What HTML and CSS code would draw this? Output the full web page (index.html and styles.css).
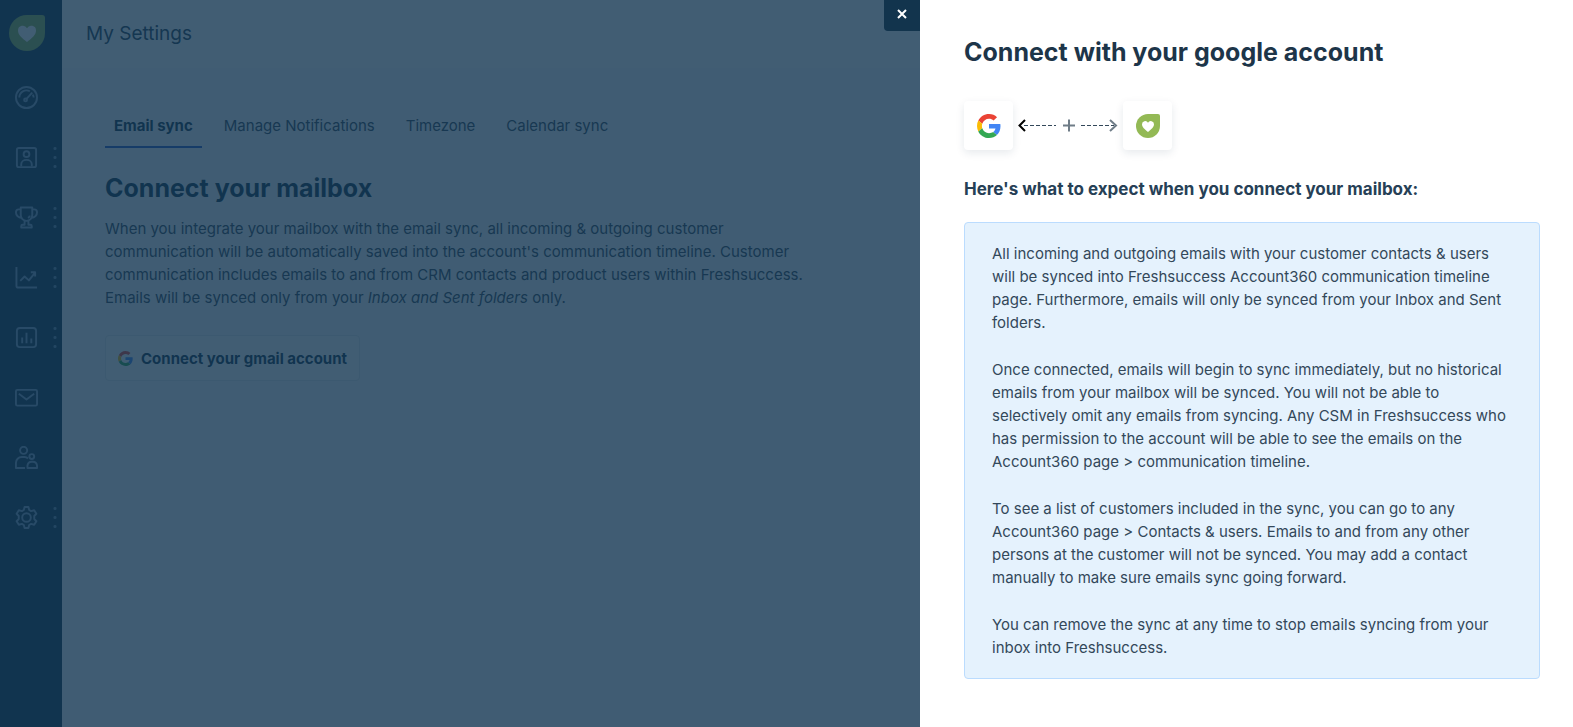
FILE: index.html
```html
<!DOCTYPE html>
<html lang="en">
<head>
  <meta charset="utf-8">
  <title>My Settings</title>
  <link rel="stylesheet" href="styles.css">
</head>
<body>
  <svg class="defs" aria-hidden="true">
    <symbol id="google" viewBox="0 0 48 48">
      <path fill="#EA4335" d="M24 9.5c3.54 0 6.71 1.22 9.21 3.6l6.85-6.85C35.9 2.38 30.47 0 24 0 14.62 0 6.51 5.38 2.56 13.22l7.98 6.19C12.43 13.72 17.74 9.5 24 9.5z"/>
      <path fill="#4285F4" d="M46.98 24.55c0-1.57-.15-3.09-.38-4.55H24v9.02h12.94c-.58 2.96-2.26 5.48-4.78 7.18l7.73 6c4.51-4.18 7.09-10.36 7.09-17.65z"/>
      <path fill="#FBBC05" d="M10.53 28.59c-.48-1.45-.76-2.99-.76-4.59s.27-3.14.76-4.59l-7.98-6.19C.92 16.46 0 20.12 0 24c0 3.88.92 7.54 2.56 10.78l7.97-6.19z"/>
      <path fill="#34A853" d="M24 48c6.48 0 11.93-2.13 15.89-5.81l-7.73-6c-2.15 1.45-4.92 2.3-8.16 2.3-6.26 0-11.57-4.22-13.47-9.91l-7.98 6.19C6.51 42.62 14.62 48 24 48z"/>
    </symbol>
    <symbol id="fresh" viewBox="0 0 36 36">
      <path class="leaf" d="M18 0h15a3 3 0 0 1 3 3v15a18 18 0 1 1-18-18z"/>
      <path class="heart" d="M18 27c-5-4-9-7-9-11.500a4.800 4.800 0 0 1 9-2.300 4.800 4.800 0 0 1 9 2.300c0 4.500-4 7.500-9 11.500z"/>
    </symbol>
  </svg>

  <div class="app">
    <nav class="sidebar">
      <a href="#" class="logo" aria-label="Home"><svg><use href="#fresh"/></svg></a>
      <a href="#" class="nav-item" aria-label="Dashboard">
        <svg viewBox="0 0 24 24"><circle cx="12" cy="12" r="11"/><path d="M4.500 12a7.500 7.500 0 0 1 11-6.500M18.500 9a7.500 7.500 0 0 1 1 3"/><circle cx="11" cy="14.500" r="1.500"/><path d="M12 13.500l6-6.500"/></svg>
      </a>
      <a href="#" class="nav-item more" aria-label="Accounts">
        <svg viewBox="0 0 24 24"><rect x="2" y="2" width="20" height="20" rx="2"/><circle cx="12" cy="8.500" r="3"/><path d="M6.500 21.500v-2.500a5.500 4.500 0 0 1 11 0v2.500"/></svg>
      </a>
      <a href="#" class="nav-item more" aria-label="Success">
        <svg viewBox="0 0 24 24"><path d="M6 1.500h12v8a6 6 0 0 1-12 0zM6 3.500H4a3 3 0 0 0-3 3c0 3 2.500 5.500 6.500 6M18 3.500h2a3 3 0 0 1 3 3c0 3-2.500 5.500-6.500 6M10 15.500v4H8a1.500 1.500 0 0 0-1.500 1.500v1.500h11V21a1.500 1.500 0 0 0-1.500-1.500h-2v-4M15.500 10a3.500 3.500 0 0 1-2 2.500"/></svg>
      </a>
      <a href="#" class="nav-item more" aria-label="Trends">
        <svg viewBox="0 0 24 24"><path d="M1.500 1v19.500a2 2 0 0 0 2 2H23M5.500 15.500l4.500-4.500 4.500 4 6.500-8M16.500 6.500H21v4.500"/></svg>
      </a>
      <a href="#" class="nav-item more" aria-label="Reports">
        <svg viewBox="0 0 24 24"><rect x="2" y="2" width="20" height="20" rx="3"/><path d="M7.500 12v6M12 7v11M17 13v5"/></svg>
      </a>
      <a href="#" class="nav-item" aria-label="Email">
        <svg viewBox="0 0 24 24"><rect x="1" y="4" width="22" height="16.500" rx="1.500"/><path d="M4 8l8 6 8-6"/></svg>
      </a>
      <a href="#" class="nav-item" aria-label="Users">
        <svg viewBox="0 0 24 24"><circle cx="9" cy="4.500" r="3.700"/><path d="M10.500 23H1v-5.500a6 6 0 0 1 6-6h3c1.500 0 2.500.5 3.500 1.500"/><circle cx="17.500" cy="11" r="2.500"/><path d="M13 23v-2.500a4.500 4.500 0 0 1 4.500-4h1a4.500 4.500 0 0 1 4.500 4V23z"/></svg>
      </a>
      <a href="#" class="nav-item more" aria-label="Settings">
        <svg viewBox="0 0 24 24"><path d="M10 1h4l.8 3.200 2 1.100L20 4.400l2.300 3.700-2.200 2.300v3.200l2.200 2.300-2.300 3.700-3.200-.9-2 1.100L14 23h-4l-.8-3.200-2-1.100-3.200.9-2.300-3.700 2.200-2.300v-3.200L1.700 8.100 4 4.400l3.200.9 2-1.100z"/><circle cx="12" cy="12" r="4.500"/></svg>
      </a>
    </nav>

    <div class="page">
      <header class="page-header">My Settings</header>
      <main class="settings">
        <nav class="tabs">
          <a href="#" class="tab active">Email sync</a>
          <a href="#" class="tab">Manage Notifications</a>
          <a href="#" class="tab">Timezone</a>
          <a href="#" class="tab">Calendar sync</a>
        </nav>
        <h1>Connect your mailbox</h1>
        <p class="intro">When you integrate your mailbox with the email sync, all incoming &amp; outgoing customer communication will be automatically saved into the account's communication timeline. Customer communication includes emails to and from CRM contacts and product users within Freshsuccess. Emails will be synced only from your <em>Inbox and Sent folders</em> only.</p>
        <button type="button" class="connect"><svg><use href="#google"/></svg>Connect your gmail account</button>
      </main>
    </div>
  </div>

  <div class="overlay"></div>

  <aside class="drawer">
    <button type="button" class="close" aria-label="Close">
      <svg viewBox="0 0 10 10"><path d="M1 1l8 8M9 1l-8 8"/></svg>
    </button>
    <h2>Connect with your google account</h2>
    <div class="link-row">
      <span class="tile"><svg><use href="#google"/></svg></span>
      <svg class="arrows" viewBox="0 0 100 16">
        <path class="dash" d="M6 7.500h32M63 7.500h33"/>
        <path class="head-left" d="M7 2L1.500 7.500 7 13"/>
        <path class="head-right" d="M92 2l6 5.500-6 5.500"/>
        <path class="plus" d="M45 7.500h12M51 1.500v12"/>
      </svg>
      <span class="tile"><svg><use href="#fresh"/></svg></span>
    </div>
    <h3>Here's what to expect when you connect your mailbox:</h3>
    <div class="info">
      <p>All incoming and outgoing emails with your customer contacts &amp; users will be synced into Freshsuccess Account360 communication timeline page. Furthermore, emails will only be synced from your Inbox and Sent folders.</p>
      <p>Once connected, emails will begin to sync immediately, but no historical emails from your mailbox will be synced. You will not be able to selectively omit any emails from syncing. Any CSM in Freshsuccess who has permission to the account will be able to see the emails on the Account360 page &gt; communication timeline.</p>
      <p>To see a list of customers included in the sync, you can go to any Account360 page &gt; Contacts &amp; users. Emails to and from any other persons at the customer will not be synced. You may add a contact manually to make sure emails sync going forward.</p>
      <p>You can remove the sync at any time to stop emails syncing from your inbox into Freshsuccess.</p>
    </div>
  </aside>
</body>
</html>
```
FILE: styles.css
```css
* {
  box-sizing: border-box;
}

body {
  margin: 0;
  font-family: Inter, "Liberation Sans", sans-serif;
  font-size: 15px;
  line-height: 23px;
  color: #12344d;
}

h1, h2, h3, p {
  margin: 0;
}

a {
  color: inherit;
  text-decoration: none;
}

.defs {
  position: absolute;
  width: 0;
  height: 0;
}

.leaf {
  fill: #93b955;
}

.heart {
  fill: #fff;
}

/* app behind the drawer */
.app {
  display: flex;
  min-height: 100vh;
}

.sidebar {
  width: 62px;
  flex-shrink: 0;
  padding: 15px 0 0 9px;
  background-color: #12344d;
}

.logo {
  display: block;
  margin-bottom: 16px;
}

.logo svg {
  display: block;
  width: 36px;
  height: 36px;
}

.nav-item {
  display: flex;
  align-items: center;
  height: 60px;
  padding-left: 6px;
  color: #80a0c0;
}

.nav-item svg {
  width: 23px;
  height: 23px;
  fill: none;
  stroke: currentColor;
  stroke-width: 2;
  stroke-linejoin: round;
}

.more::after {
  content: "";
  width: 4px;
  height: 22px;
  margin-left: 15px;
  background: radial-gradient(circle, currentColor 1px, transparent 2px) 0 0 / 4px 9px;
  background-position: 0 -2px;
  opacity: 0.8;
}

.page {
  flex: 1;
  background-color: #fafbfc;
}

.page-header {
  height: 68px;
  padding: 0 24px;
  font-size: 19px;
  line-height: 68px;
  color: #264056;
  background-color: #fff;
}

.settings {
  padding: 37px 43px;
}

.tabs {
  display: flex;
  gap: 13px;
}

.tab {
  padding: 9px 9px 9px;
  color: #33485a;
  border-bottom: 2px solid transparent;
}

.tab.active {
  font-weight: 700;
  color: #12344d;
  border-color: #2c5cc5;
}

h1, h2 {
  font-size: 25px;
  line-height: 36px;
  font-weight: 700;
}

h1 {
  margin-top: 22px;
}

.intro {
  max-width: 720px;
  margin-top: 11px;
  color: #33485a;
}

.connect {
  display: flex;
  align-items: center;
  gap: 8px;
  height: 46px;
  margin-top: 26px;
  padding: 0 12px;
  font: inherit;
  font-weight: 700;
  color: #12344d;
  background-color: #fff;
  border: 1px solid #e3e8ed;
  border-radius: 4px;
}

.connect svg {
  width: 15px;
  height: 15px;
}

.overlay {
  position: fixed;
  inset: 0;
  background-color: rgba(18, 52, 80, 0.8);
}

/* drawer */
.drawer {
  position: fixed;
  top: 0;
  right: 0;
  bottom: 0;
  width: 653px;
  padding: 34px 33px 34px 44px;
  background-color: #fff;
}

.close {
  position: absolute;
  top: 0;
  right: 100%;
  display: flex;
  align-items: center;
  justify-content: center;
  width: 36px;
  height: 31px;
  padding: 0 0 3px;
  background-color: #12344d;
  border: none;
  border-radius: 0 0 0 4px;
}

.close svg {
  width: 10px;
  height: 10px;
  stroke: #fff;
  stroke-width: 2;
}

h2 {
  color: #1d3549;
}

.link-row {
  display: flex;
  align-items: center;
  gap: 5px;
  margin-top: 31px;
}

.tile {
  display: flex;
  align-items: center;
  justify-content: center;
  width: 49px;
  height: 49px;
  border-radius: 4px;
  box-shadow: 0 3px 8px rgba(18, 52, 77, 0.1);
}

.tile svg {
  width: 24px;
  height: 24px;
}

.arrows {
  width: 100px;
  height: 16px;
  fill: none;
  stroke-width: 2;
}

.dash {
  stroke: #33485a;
  stroke-width: 1;
  stroke-dasharray: 4 2;
}

.head-left {
  stroke: #000;
}

.head-right,
.plus {
  stroke: #6f7c87;
}

h3 {
  margin-top: 27px;
  font-size: 17px;
  line-height: 24px;
  font-weight: 700;
  color: #264056;
}

.info {
  display: flex;
  flex-direction: column;
  gap: 24px;
  margin-top: 21px;
  padding: 19px 27px;
  color: #33485a;
  background-color: #e5f2fd;
  border: 1px solid #bbdcfe;
  border-radius: 4px;
}
```
